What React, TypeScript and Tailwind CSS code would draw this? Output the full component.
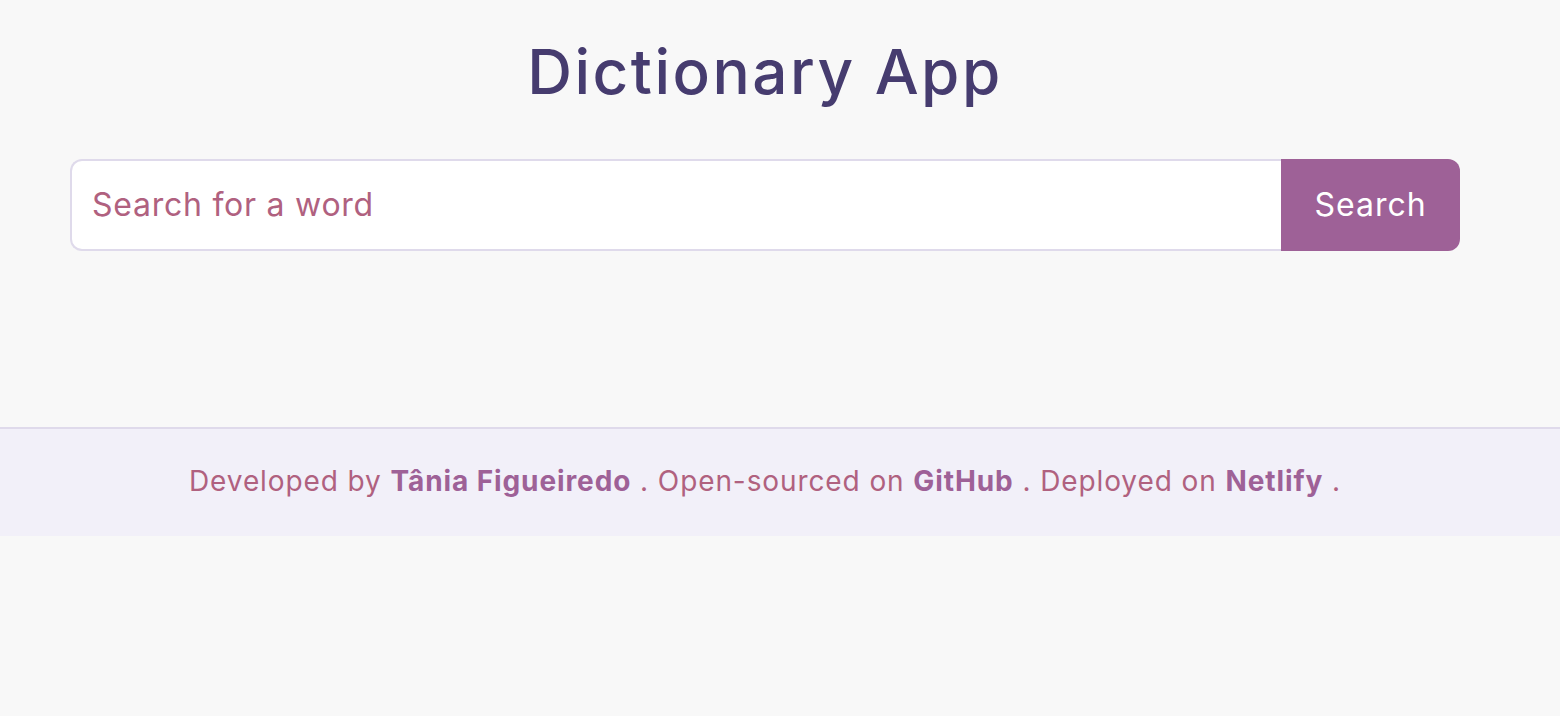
const App = () => {
  return (
    <div className="min-h-[716px] bg-[#f8f8f8] font-['Inter',sans-serif]">
      <main className="pl-[70px] pr-[100px] pt-[28px] pb-[176px]">
        <h1 className="text-center text-[62px] leading-[88px] font-medium text-[#463c6f] tracking-[2.5px]">
          Dictionary App
        </h1>
        <form className="flex mt-[43px] h-[92px]" onSubmit={(e) => e.preventDefault()}>
          <input
            type="text"
            placeholder="Search for a word"
            className="flex-1 min-w-0 bg-white border-2 border-r-0 border-[#dfdaeb] rounded-l-[12px] px-[20px] text-[32px] tracking-[0.75px] text-[#463c6f] placeholder:text-[#b0617f] outline-none"
          />
          <button
            type="submit"
            className="w-[179px] bg-[#9e6197] text-white text-[32px] tracking-[1px] rounded-r-[12px]"
          >
            Search
          </button>
        </form>
      </main>
      <footer className="bg-[#f2f0f9] border-t-2 border-[#dfdaeb] h-[109px] flex items-center justify-center pr-[30px] pb-[3px] text-[28px] tracking-[0.9px] text-[#b0617f]">
        <p>
          Developed by <a className="font-bold text-[#9e6197]" href="#">Tânia Figueiredo</a> . Open-sourced on{" "}
          <a className="font-bold text-[#9e6197]" href="#">GitHub</a> . Deployed on{" "}
          <a className="font-bold text-[#9e6197]" href="#">Netlify</a> .
        </p>
      </footer>
    </div>
  );
};

export default App;
